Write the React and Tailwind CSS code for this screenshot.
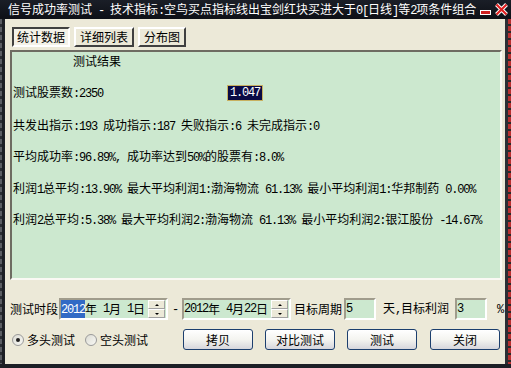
import React from 'react'

// split text: CJK runs at 12px, ASCII runs as a 6px-wide mono face (like SimSun)
function T({ s }) {
  return s.split(/([\x20-\x7e]+)/).map((p, i) =>
    /^[\x20-\x7e]+$/.test(p) ? (
      <span key={i} className="font-['Liberation_Mono',monospace] text-[12px] tracking-[-1.2px]">
        {p}
      </span>
    ) : (
      <span key={i}>{p}</span>
    )
  )
}

function Tab({ label, active, w }) {
  return (
    <div
      className={`h-[20px] flex items-center justify-center border-2 ${
        active
          ? 'border-t-[#404040] border-l-[#404040] border-b-white border-r-white bg-[#f4f2e8]'
          : 'border-t-white border-l-white border-b-[#404040] border-r-[#404040]'
      }`}
      style={{ width: w }}
    >
      {label}
    </div>
  )
}

function Spinner() {
  return (
    <div className="flex flex-col w-[17px] h-[18px] mr-[1px]">
      <div className="flex-1 flex items-center justify-center border border-t-white border-l-white border-b-[#a0a0a0] border-r-[#a0a0a0] bg-[#ece9d8]">
        <div className="w-0 h-0 border-l-[2px] border-r-[2px] border-b-[2px] border-l-transparent border-r-transparent border-b-black" />
      </div>
      <div className="flex-1 flex items-center justify-center border border-t-white border-l-white border-b-[#a0a0a0] border-r-[#a0a0a0] bg-[#ece9d8]">
        <div className="w-0 h-0 border-l-[2px] border-r-[2px] border-t-[2px] border-l-transparent border-r-transparent border-t-black" />
      </div>
    </div>
  )
}

function Field({ w, children }) {
  return (
    <div
      className="h-[22px] flex items-center border-2 border-t-[#a09c8c] border-l-[#a09c8c] border-b-white border-r-white bg-[#cce8cf] whitespace-pre"
      style={{ width: w }}
    >
      {children}
    </div>
  )
}

function Btn({ label, className = '' }) {
  return (
    <div
      className={`w-[70px] h-[21px] flex items-center justify-center rounded-[3px] border border-[#1c3f6e] bg-gradient-to-b from-white via-[#f4f4f0] to-[#d6d6dc] ${className}`}
    >
      {label}
    </div>
  )
}

function Radio({ checked }) {
  return (
    <div className="w-[12px] h-[12px] rounded-full border border-[#9a9a9a] bg-gradient-to-br from-[#dcdcd4] to-[#f8f8f4] flex items-center justify-center">
      {checked && <div className="w-[4px] h-[4px] rounded-full bg-[#202020]" />}
    </div>
  )
}

export default function App() {
  return (
    <div className="w-[511px] h-[368px] bg-[#15181e] flex flex-col overflow-hidden text-[12px] leading-[16px] text-black font-['Noto_Sans_CJK_SC',sans-serif]">
      {/* title bar */}
      <div className="h-[19px] flex items-center pl-[8px] text-white whitespace-pre bg-gradient-to-b from-[#1a1e27] to-[#0e1016]">
        <div className="w-[472px] shrink-0">
          <T s="信号成功率测试 - 技术指标:空鸟买点指标线出宝剑红块买进大于0[日线]等2项条件组合" />
        </div>
        <svg width="12" height="6" viewBox="0 0 12 6" className="mt-[7px] shrink-0">
          <rect x="0" y="0" width="11" height="5" fill="#ffffff" />
          <rect x="1" y="1" width="9" height="3" fill="#d02020" />
        </svg>
        <svg width="13" height="13" viewBox="0 0 13 13" className="ml-[3px] shrink-0">
          <path d="M1.5 1.5 L11.5 11.5 M11.5 1.5 L1.5 11.5" stroke="#ffffff" strokeWidth="4" />
          <path d="M1.5 1.5 L11.5 11.5 M11.5 1.5 L1.5 11.5" stroke="#e02020" strokeWidth="2.2" />
        </svg>
      </div>

      <div className="flex flex-1 min-h-0">
        <div className="w-[2px] bg-[repeating-linear-gradient(to_bottom,#5a5d63_0px,#5a5d63_5px,#2a2d33_5px,#2a2d33_8px)]" />
        <div className="w-[3px] bg-[#1c1f25]" />

        <div className="w-[500px] bg-[#ece9d8] flex flex-col">
          {/* tabs */}
          <div className="flex gap-[4px] pt-[8px] pl-[7px]">
            <Tab label="统计数据" active w={58} />
            <Tab label="详细列表" w={60} />
            <Tab label="分布图" w={48} />
          </div>

          {/* result panel */}
          <div className="mt-[3px] ml-[5px] mr-[3px] h-[230px] border-2 border-t-[#6e6c62] border-l-[#6e6c62] border-b-[#faf9f4] border-r-[#faf9f4] bg-[#cce8cf] pl-[1px] pt-[1px] whitespace-pre">
            <div className="ml-[60px] h-[16px]">
              <T s="测试结果" />
            </div>
            <div className="mt-[16px] h-[16px] flex items-center">
              <div className="w-[214px]">
                <T s="测试股票数:2350" />
              </div>
              <div className="h-[16px] w-[36px] flex items-center justify-center bg-[#0b0b45] border border-[#c8b060] text-white">
                <T s="1.047" />
              </div>
            </div>
            <div className="mt-[16px] h-[16px]">
              <T s="共发出指示:193 成功指示:187 失败指示:6 未完成指示:0" />
            </div>
            <div className="mt-[15px] h-[16px]">
              <T s="平均成功率:96.89%, 成功率达到50%的股票有:8.0%" />
            </div>
            <div className="mt-[16px] h-[16px]">
              <T s="利润1总平均:13.90% 最大平均利润1:渤海物流 61.13% 最小平均利润1:华邦制药 0.00%" />
            </div>
            <div className="mt-[15px] h-[16px]">
              <T s="利润2总平均:5.38% 最大平均利润2:渤海物流 61.13% 最小平均利润2:银江股份 -14.67%" />
            </div>
          </div>

          {/* date range row */}
          <div className="mt-[18px] h-[22px] flex items-center pl-[5px] whitespace-pre">
            <span className="w-[48px]">测试时段</span>
            <div className="ml-[1px]">
              <Field w={109}>
                <div className="flex-1 flex items-center">
                  <span className="bg-[#316ac5] text-white">
                    <T s="2012" />
                  </span>
                  <T s="年 1月 1日" />
                </div>
                <Spinner />
              </Field>
            </div>
            <span className="ml-[4px]">
              <T s="-" />
            </span>
            <div className="ml-[4px]">
              <Field w={109}>
                <div className="flex-1 flex items-center">
                  <T s="2012年 4月22日" />
                </div>
                <Spinner />
              </Field>
            </div>
            <span className="ml-[3px]">目标周期</span>
            <div className="ml-[2px]">
              <Field w={32}>
                <T s="5" />
              </Field>
            </div>
            <span className="ml-[7px]">
              <T s="天,目标利润" />
            </span>
            <div className="ml-[6px]">
              <Field w={32}>
                <T s="3" />
              </Field>
            </div>
            <span className="ml-[10px]">
              <T s="%" />
            </span>
          </div>

          {/* options / buttons row */}
          <div className="mt-[9px] h-[21px] flex items-center pl-[7px]">
            <Radio checked />
            <span className="ml-[3px]">多头测试</span>
            <div className="ml-[10px]">
              <Radio />
            </div>
            <span className="ml-[3px]">空头测试</span>
            <div className="ml-[35px] flex gap-[12px]">
              <Btn label="拷贝" />
              <Btn label="对比测试" />
              <Btn label="测试" />
              <Btn label="关闭" className="ml-[1px]" />
            </div>
          </div>
        </div>

        <div className="w-[3px] bg-[#2b2e34]" />
        <div className="w-[3px] bg-[repeating-linear-gradient(to_bottom,#b83030_0px,#b83030_5px,#2a2a2a_5px,#2a2a2a_7px)]" />
      </div>
      <div className="h-[4px] bg-[#1c1f25]" />
    </div>
  )
}
